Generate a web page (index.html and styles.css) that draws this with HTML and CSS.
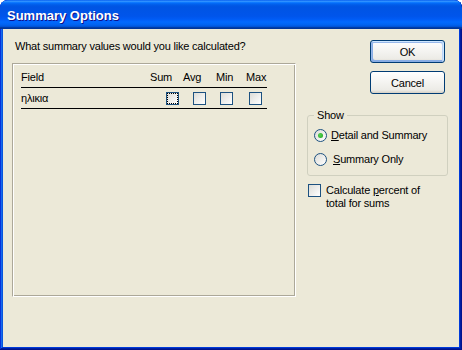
FILE: index.html
```html
<!DOCTYPE html>
<html>
<head>
<meta charset="utf-8">
<link rel="stylesheet" href="styles.css">
</head>
<body>
<div class="window">
  <div class="titlebar">Summary Options</div>
  <div class="client">
    <div class="left">
      <div class="prompt">What summary values would you like calculated?</div>
      <div class="panel">
        <div class="row head">
          <span class="c-field">Field</span>
          <span class="c-sum">Sum</span>
          <span class="c-avg">Avg</span>
          <span class="c-min">Min</span>
          <span class="c-max">Max</span>
        </div>
        <div class="row data">
          <span class="d-field">ηλικια</span>
          <span class="cb focus"><span class="dots"></span></span>
          <span class="cb cb-avg"></span>
          <span class="cb cb-min"></span>
          <span class="cb cb-max"></span>
        </div>
      </div>
    </div>
    <div class="right">
      <button class="btn default">OK</button>
      <button class="btn">Cancel</button>
      <fieldset class="group">
        <legend>Show</legend>
        <div class="opt first"><span class="radio checked"></span><span class="olabel"><u>D</u>etail and Summary</span></div>
        <div class="opt second"><span class="radio"></span><span class="olabel wide"><u>S</u>ummary Only</span></div>
      </fieldset>
      <div class="check">
        <span class="cb"></span>
        <span class="clabel">Calculate <u>p</u>ercent of<br>total for sums</span>
      </div>
    </div>
  </div>
</div>
</body>
</html>
```

FILE: styles.css
```css
html, body {
  margin: 0;
  padding: 0;
  background: #ffffff;
}
body {
  font-family: "Liberation Sans", Arial, sans-serif;
  font-size: 11px;
  letter-spacing: -0.2px;
  color: #000;
}
.window {
  width: 462px;
  height: 350px;
  display: flex;
  flex-direction: column;
  background: #0831d9;
  border-radius: 8px 8px 0 0;
  box-shadow: inset -1px -1px #00138c, inset 1px 1px #0831d9, inset -2px -2px #001ea0, inset 2px 2px #166aee, inset -3px -3px #003bda, inset 3px 3px #0855dd;
  overflow: hidden;
}
.titlebar {
  height: 29px;
  box-sizing: border-box;
  padding: 3px 0 0 7px;
  line-height: 26px;
  font-size: 13px;
  font-weight: bold;
  letter-spacing: 0;
  color: #fff;
  text-shadow: 1px 1px #0f1089;
  background: linear-gradient(to bottom, #0058ee 0%, #3593ff 4%, #288eff 6%, #127dff 8%, #036ffc 10%, #0262ee 14%, #0057e5 20%, #0054e3 24%, #0055eb 56%, #005bf5 66%, #026afe 76%, #0062ef 86%, #0052d6 92%, #0040ab 94%, #003092 100%);
  border-radius: 7px 7px 0 0;
}
.client {
  flex: 1;
  margin: 0 3px 3px 3px;
  background: #ece9d8;
  display: flex;
  padding: 10px 0 0 9px;
}
.left {
  width: 284px;
  display: flex;
  flex-direction: column;
}
.prompt {
  margin: 1px 0 0 3px;
  line-height: 13px;
  height: 13px;
}
.panel {
  margin-top: 10px;
  height: 234px;
  box-sizing: border-box;
  border: 1px solid;
  border-color: #aca899 #fff #fff #aca899;
  box-shadow: inset 1px 1px 0 #fff, inset -1px -1px 0 #aca899;
  padding: 6px 0 0 8px;
}
.row {
  display: flex;
  align-items: center;
  width: 246px;
  border-bottom: 1px solid #000;
}
.head {
  height: 18px;
  box-sizing: border-box;
  padding-top: 1px;
  align-items: flex-start;
  line-height: 13px;
}
.head { height: 18px; }
.c-field { width: 129px; }
.c-sum { width: 33px; }
.c-avg { width: 33px; }
.c-min { width: 30px; }
.data {
  height: 20px;
}
.d-field { width: 145px; }
.cb {
  width: 13px;
  height: 13px;
  box-sizing: border-box;
  border: 1px solid #1c5180;
  background: linear-gradient(135deg, #dcdcd7, #fff);
  display: inline-block;
  position: relative;
}
.cb-avg { margin-left: 14px; }
.cb-min { margin-left: 14px; }
.cb-max { margin-left: 16px; }
.dots {
  position: absolute;
  left: 0;
  top: 0;
  width: 11px;
  height: 11px;
  box-sizing: border-box;
  border: 1px dotted #000;
}
.right {
  width: 141px;
  margin-left: 11px;
  padding-top: 1px;
  display: flex;
  flex-direction: column;
}
.btn {
  margin-left: 63px;
  width: 75px;
  height: 23px;
  box-sizing: border-box;
  border: 1px solid #003c74;
  border-radius: 3px;
  background: linear-gradient(180deg, #fff, #ecebe6 86%, #d6d0c5);
  font-family: "Liberation Sans", Arial, sans-serif;
  font-size: 11px;
  letter-spacing: -0.2px;
  color: #000;
  padding: 0;
  margin-bottom: 8px;
}
.btn.default {
  box-shadow: inset -1px 1px #cee7ff, inset 1px 2px #98b8ea, inset -2px 2px #bcd4f6, inset 1px -1px #89ade4, inset 2px -2px #89ade4;
}
.group {
  margin: 7px 0 0 0;
  padding: 0 6px 9px 6px;
  border: 1px solid #d0d0bf;
  border-radius: 3px;
}
.group legend {
  padding: 0 3px;
  line-height: 13px;
}
.opt {
  display: flex;
  align-items: center;
  height: 13px;
  line-height: 13px;
}
.opt.first { margin-top: 7px; }
.opt.second { margin-top: 11px; }
.radio {
  width: 13px;
  height: 13px;
  box-sizing: border-box;
  border: 1px solid #1c5180;
  border-radius: 50%;
  background: linear-gradient(135deg, #dcdcd7, #fff);
  position: relative;
  flex: none;
}
.radio.checked::after {
  content: "";
  position: absolute;
  left: 3px;
  top: 3px;
  width: 5px;
  height: 5px;
  border-radius: 50%;
  background: radial-gradient(circle at 40% 40%, #55d551, #21a121);
}
.olabel { margin-left: 4px; }
.olabel.wide { margin-left: 6px; }
.check {
  display: flex;
  align-items: flex-start;
  margin-top: 8px;
  margin-left: 1px;
}
.check .cb { flex: none; }
.clabel {
  margin-left: 5px;
  line-height: 13px;
}
u { text-decoration: underline; }
```
